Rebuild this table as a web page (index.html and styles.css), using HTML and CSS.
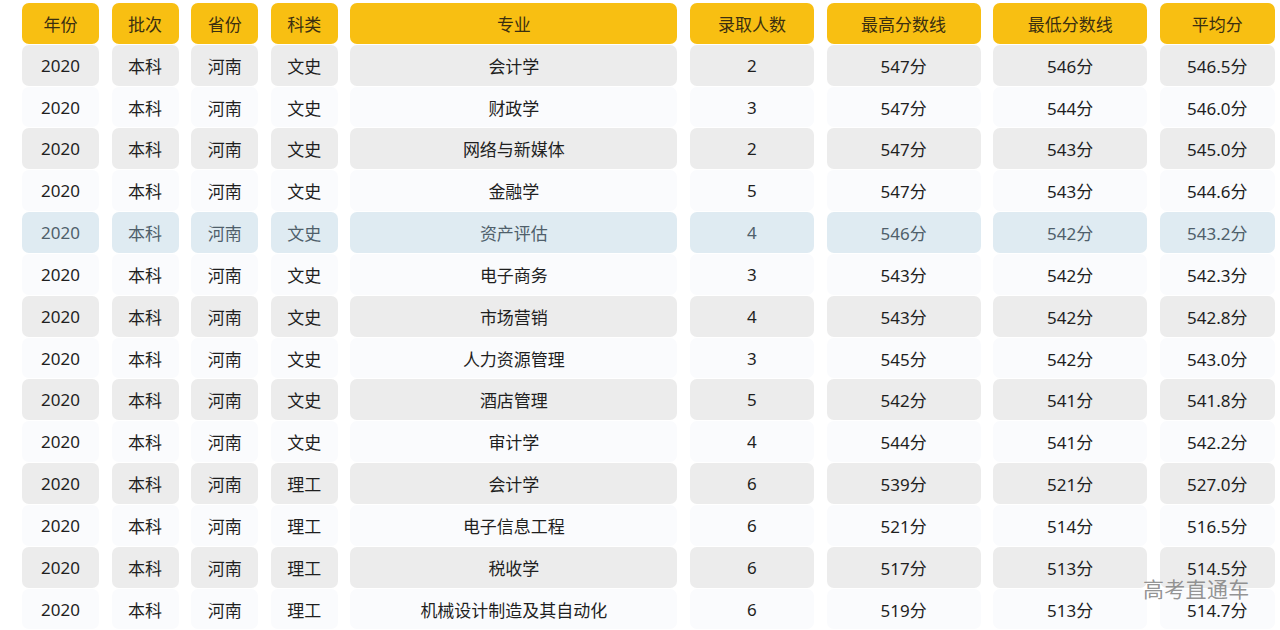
FILE: index.html
```html
<!DOCTYPE html>
<html lang="zh-CN">
<head>
<meta charset="utf-8">
<title>录取分数线</title>
<link rel="stylesheet" href="styles.css">
</head>
<body>
<div class="page">
  <div class="table">
    <div class="row head"><div>年份</div><div>批次</div><div>省份</div><div>科类</div><div>专业</div><div>录取人数</div><div>最高分数线</div><div>最低分数线</div><div>平均分</div></div>
    <div class="row gray"><div>2020</div><div>本科</div><div>河南</div><div>文史</div><div>会计学</div><div>2</div><div>547分</div><div>546分</div><div>546.5分</div></div>
    <div class="row light"><div>2020</div><div>本科</div><div>河南</div><div>文史</div><div>财政学</div><div>3</div><div>547分</div><div>544分</div><div>546.0分</div></div>
    <div class="row gray"><div>2020</div><div>本科</div><div>河南</div><div>文史</div><div>网络与新媒体</div><div>2</div><div>547分</div><div>543分</div><div>545.0分</div></div>
    <div class="row light"><div>2020</div><div>本科</div><div>河南</div><div>文史</div><div>金融学</div><div>5</div><div>547分</div><div>543分</div><div>544.6分</div></div>
    <div class="row hover"><div>2020</div><div>本科</div><div>河南</div><div>文史</div><div>资产评估</div><div>4</div><div>546分</div><div>542分</div><div>543.2分</div></div>
    <div class="row light"><div>2020</div><div>本科</div><div>河南</div><div>文史</div><div>电子商务</div><div>3</div><div>543分</div><div>542分</div><div>542.3分</div></div>
    <div class="row gray"><div>2020</div><div>本科</div><div>河南</div><div>文史</div><div>市场营销</div><div>4</div><div>543分</div><div>542分</div><div>542.8分</div></div>
    <div class="row light"><div>2020</div><div>本科</div><div>河南</div><div>文史</div><div>人力资源管理</div><div>3</div><div>545分</div><div>542分</div><div>543.0分</div></div>
    <div class="row gray"><div>2020</div><div>本科</div><div>河南</div><div>文史</div><div>酒店管理</div><div>5</div><div>542分</div><div>541分</div><div>541.8分</div></div>
    <div class="row light"><div>2020</div><div>本科</div><div>河南</div><div>文史</div><div>审计学</div><div>4</div><div>544分</div><div>541分</div><div>542.2分</div></div>
    <div class="row gray"><div>2020</div><div>本科</div><div>河南</div><div>理工</div><div>会计学</div><div>6</div><div>539分</div><div>521分</div><div>527.0分</div></div>
    <div class="row light"><div>2020</div><div>本科</div><div>河南</div><div>理工</div><div>电子信息工程</div><div>6</div><div>521分</div><div>514分</div><div>516.5分</div></div>
    <div class="row gray"><div>2020</div><div>本科</div><div>河南</div><div>理工</div><div>税收学</div><div>6</div><div>517分</div><div>513分</div><div>514.5分</div></div>
    <div class="row light"><div>2020</div><div>本科</div><div>河南</div><div>理工</div><div>机械设计制造及其自动化</div><div>6</div><div>519分</div><div>513分</div><div>514.7分</div></div>
  </div>
  <div class="watermark">高考直通车</div>
</div>
</body>
</html>
```
FILE: styles.css
```css
html, body {
  margin: 0;
  padding: 0;
  background: #ffffff;
  overflow: hidden;
}

.page {
  position: relative;
  width: 1280px;
  height: 630px;
  padding: 3px 0 0 22px;
  box-sizing: border-box;
  font-family: "Noto Sans", "Noto Sans CJK SC", sans-serif;
  font-size: 17px;
  color: #1f1f1f;
}

.table {
  display: grid;
  grid-template-columns: 77px 67px 67px 67px 327px 124px 154px 154px 115px;
  grid-auto-rows: 40.83px;
  column-gap: 12.6px;
  row-gap: 1px;
}

.row {
  display: contents;
}

.row > div {
  display: flex;
  align-items: center;
  justify-content: center;
  border-radius: 7px;
  white-space: nowrap;
}

.head > div {
  background: #f8bf12;
  color: #3b2f10;
}

.gray > div {
  background: #ececec;
}

.light > div {
  background: #fafbfd;
}

.hover > div {
  background: #dfebf2;
  color: #4f5f6b;
}

.watermark {
  position: absolute;
  left: 1143px;
  top: 573px;
  font-family: "Noto Sans CJK SC", sans-serif;
  font-size: 21px;
  color: rgba(120, 120, 120, 0.8);
  letter-spacing: 0.3px;
}
```
